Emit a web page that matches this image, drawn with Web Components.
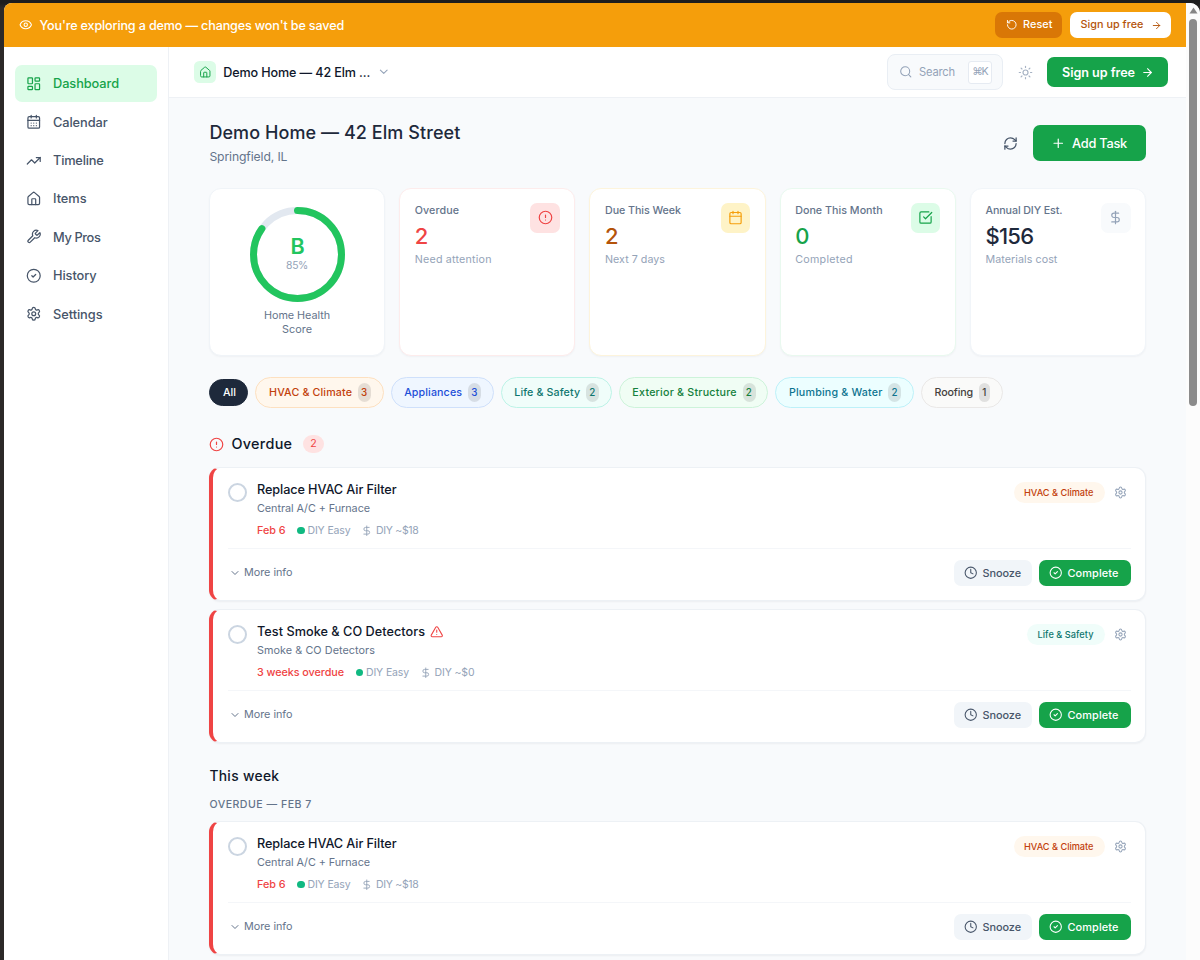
<!DOCTYPE html>
<html lang="en">
<head>
<meta charset="utf-8">
<title>Demo Home — Dashboard</title>
<style>
html,body{margin:0;height:960px;overflow:hidden}
body{font-family:Inter,"Open Sans",sans-serif;background:#2c2928;color:#0f172a}
</style>
</head>
<body>
<app-window></app-window>
<script>
const ICONS={
eye:'<path d="M2.06 12.35a1 1 0 0 1 0-.7 10.75 10.75 0 0 1 19.88 0 1 1 0 0 1 0 .7 10.75 10.75 0 0 1-19.88 0"/><circle cx="12" cy="12" r="3"/>',
reset:'<path d="M3 12a9 9 0 1 0 9-9 9.75 9.75 0 0 0-6.74 2.74L3 8"/><path d="M3 3v5h5"/>',
arrow:'<path d="M5 12h14"/><path d="m12 5 7 7-7 7"/>',
dash:'<rect x="3" y="3" width="7" height="9" rx="1"/><rect x="14" y="3" width="7" height="5" rx="1"/><rect x="14" y="12" width="7" height="9" rx="1"/><rect x="3" y="16" width="7" height="5" rx="1"/>',
caldays:'<path d="M8 2v4M16 2v4"/><rect x="3" y="4" width="18" height="18" rx="2"/><path d="M3 10h18M8 14h.01M12 14h.01M16 14h.01M8 18h.01M12 18h.01M16 18h.01"/>',
cal:'<path d="M8 2v4M16 2v4"/><rect x="3" y="4" width="18" height="18" rx="2"/><path d="M3 10h18"/>',
trend:'<path d="m22 7-8.5 8.5-5-5L2 17"/><path d="M16 7h6v6"/>',
home:'<path d="M15 21v-8a1 1 0 0 0-1-1h-4a1 1 0 0 0-1 1v8"/><path d="M3 10a2 2 0 0 1 .709-1.528l7-6a2 2 0 0 1 2.582 0l7 6A2 2 0 0 1 21 10v9a2 2 0 0 1-2 2H5a2 2 0 0 1-2-2z"/>',
wrench:'<path d="M14.7 6.3a1 1 0 0 0 0 1.4l1.6 1.6a1 1 0 0 0 1.4 0l3.77-3.77a6 6 0 0 1-7.94 7.94l-6.91 6.91a2.12 2.12 0 0 1-3-3l6.91-6.91a6 6 0 0 1 7.94-7.94l-3.76 3.76z"/>',
check:'<circle cx="12" cy="12" r="10"/><path d="m9 12 2 2 4-4"/>',
gear:'<path d="M9.671 4.136a2.34 2.34 0 0 1 4.659 0 2.34 2.34 0 0 0 3.319 1.915 2.34 2.34 0 0 1 2.33 4.033 2.34 2.34 0 0 0 0 3.831 2.34 2.34 0 0 1-2.33 4.033 2.34 2.34 0 0 0-3.319 1.915 2.34 2.34 0 0 1-4.659 0 2.34 2.34 0 0 0-3.32-1.915 2.34 2.34 0 0 1-2.33-4.033 2.34 2.34 0 0 0 0-3.831A2.34 2.34 0 0 1 6.35 6.051a2.34 2.34 0 0 0 3.319-1.915"/><circle cx="12" cy="12" r="3"/>',
down:'<path d="m6 9 6 6 6-6"/>',
search:'<circle cx="11" cy="11" r="8"/><path d="m21 21-4.3-4.3"/>',
sun:'<circle cx="12" cy="12" r="4"/><path d="M12 2v2M12 20v2M4.93 4.93l1.41 1.41M17.66 17.66l1.41 1.41M2 12h2M20 12h2M6.34 17.66l-1.41 1.41M19.07 4.93l-1.41 1.41"/>',
refresh:'<path d="M3 12a9 9 0 0 1 9-9 9.75 9.75 0 0 1 6.74 2.74L21 8"/><path d="M21 3v5h-5"/><path d="M21 12a9 9 0 0 1-9 9 9.75 9.75 0 0 1-6.74-2.74L3 16"/><path d="M8 16H3v5"/>',
plus:'<path d="M5 12h14M12 5v14"/>',
alert:'<circle cx="12" cy="12" r="10"/><path d="M12 8v4M12 16h.01"/>',
square:'<path d="M21 10.656V19a2 2 0 0 1-2 2H5a2 2 0 0 1-2-2V5a2 2 0 0 1 2-2h12.344"/><path d="m9 11 3 3L22 4"/>',
dollar:'<path d="M12 2v20"/><path d="M17 5H9.500a3.500 3.500 0 0 0 0 7h5a3.500 3.500 0 0 1 0 7H6"/>',
warn:'<path d="m21.73 18-8-14a2 2 0 0 0-3.480 0l-8 14A2 2 0 0 0 4 21h16a2 2 0 0 0 1.730-3"/><path d="M12 9v4M12 17h.01"/>',
clock:'<circle cx="12" cy="12" r="10"/><path d="M12 6v6l4 2"/>'
};
const define=(name,render)=>customElements.define(name,class extends HTMLElement{
  connectedCallback(){
    if(this.shadowRoot)return;
    this.attachShadow({mode:'open'}).innerHTML=render(k=>this.getAttribute(k)||'',this);
  }
});
const base='*{box-sizing:border-box}';

define('ui-icon',a=>`<style>:host{display:block;flex:none;width:${a('size')}px;height:${a('size')}px}svg{display:block;width:100%;height:100%}</style>
<svg viewBox="0 0 24 24" fill="none" stroke="currentColor" stroke-width="${a('stroke')||1.9}" stroke-linecap="round" stroke-linejoin="round">${ICONS[a('name')]}</svg>`);

define('demo-banner',()=>`<style>${base}
:host{display:flex;align-items:center;height:44px;padding:0 15px 0 15px;background:#f59e0b;color:#fff}
.msg{margin-left:7px;flex:1;padding-top:1px}
.b{display:flex;align-items:center;height:26px;border-radius:7px;padding:0 11px}
.reset{background:#d97706;width:67px;gap:5.500px;margin-right:7.500px}
.sign{background:#fff;color:#b45309;width:101.500px;gap:7px}
</style><ui-icon name="eye" size="13.500"></ui-icon><div class="msg"><fit-text w="304.500" size="12.600" weight="450">You're exploring a demo — changes won't be saved</fit-text></div>
<div class="b reset"><ui-icon name="reset" size="11.500" stroke="2"></ui-icon><fit-text w="29.500" size="10.800" weight="550">Reset</fit-text></div>
<div class="b sign"><fit-text w="63" size="10.800" weight="550">Sign up free</fit-text><ui-icon name="arrow" size="11" stroke="2"></ui-icon></div>`);

define('nav-item',(a,el)=>`<style>${base}
:host{display:flex;align-items:center;height:36.400px;padding:0 0 0 11px;gap:11.500px;border-radius:7px;color:#475569}
:host([active]){background:#dcfce7;color:#16a34a}
fit-text{padding-top:1.500px}
</style><ui-icon name="${a('icon')}" size="15.500"></ui-icon><fit-text w="${a('w')}" size="12.800" weight="450">${a('label')}</fit-text>`);

define('side-nav',()=>`<style>${base}
:host{display:flex;flex-direction:column;gap:2px;width:165px;flex:none;background:#fff;border-right:1px solid #eef1f5;padding:18.300px 11px 0 11px}
</style><nav-item active icon="dash" label="Dashboard" w="66"></nav-item>
<nav-item icon="caldays" label="Calendar" w="54.500"></nav-item>
<nav-item icon="trend" label="Timeline" w="50.500"></nav-item>
<nav-item icon="home" label="Items" w="33.500"></nav-item>
<nav-item icon="wrench" label="My Pros" w="47.500"></nav-item>
<nav-item icon="check" label="History" w="43.500"></nav-item>
<nav-item icon="gear" label="Settings" w="49.500"></nav-item>`);

define('top-bar',()=>`<style>${base}
:host{display:flex;align-items:center;height:51px;padding:0 18px 0 25.200px;background:#fff;border-bottom:1px solid #eef1f5}
.tile{width:22px;height:22px;border-radius:5.500px;background:#dcfce7;color:#16a34a;display:grid;place-items:center;margin-right:7px}
.name{padding-top:1px}
.down{color:#94a3b8;margin-left:6.500px}
.search{margin-left:auto;width:116px;height:36px;border:1px solid #e9eef4;border-radius:8px;background:#f8fafc;display:flex;align-items:center;padding:0 10px 0 10.500px;color:#94a3b8}
.q{margin-left:7px;flex:1;padding-top:.5px}
kbd{width:24.500px;height:23px;border:1px solid #e6ebf2;border-radius:3px;background:#fff;display:grid;place-items:center;font-family:inherit}
.sun{color:#a7b3c4;margin:0 14.500px 0 14.500px}
.cta{width:121px;height:29.500px;border-radius:7px;background:#16a34a;color:#fff;display:flex;align-items:center;padding-left:15px;gap:5.500px}
.cta fit-text{padding-top:1px}
</style><div class="tile"><ui-icon name="home" size="12.500"></ui-icon></div>
<fit-text class="name" w="147" size="12.600" weight="550">Demo Home — 42 Elm ...</fit-text><ui-icon class="down" name="down" size="13.500"></ui-icon>
<div class="search"><ui-icon name="search" size="13.500"></ui-icon><div class="q"><fit-text w="36" size="11.200">Search</fit-text></div><kbd><fit-text w="15" size="10.600">⌘K</fit-text></kbd></div>
<ui-icon class="sun" name="sun" size="15"></ui-icon>
<div class="cta"><fit-text w="73" size="12.600" weight="620">Sign up free</fit-text><ui-icon name="arrow" size="13" stroke="2"></ui-icon></div>`);

define('page-head',()=>`<style>${base}
:host{display:flex;align-items:center;height:37px;color:#1e293b}
.t{flex:1;display:flex;flex-direction:column;gap:1px;margin-top:2px}.s{color:#64748b}
.r{color:#475569;margin-right:15px}
.add{width:113.500px;height:36.500px;border-radius:7px;background:#16a34a;color:#fff;display:flex;align-items:center;padding-left:18.500px;gap:6.500px}
.add fit-text{padding-top:1px}
</style><div class="t"><fit-text w="251" size="18" weight="550" lh="24">Demo Home — 42 Elm Street</fit-text><fit-text class="s" w="78" size="12.200" lh="22">Springfield, IL</fit-text></div>
<ui-icon class="r" name="refresh" size="15" stroke="2"></ui-icon>
<div class="add"><ui-icon name="plus" size="14.500" stroke="2"></ui-icon><fit-text w="55" size="12.800" weight="550">Add Task</fit-text></div>`);

const card='background:#fff;border-radius:12px;box-shadow:0 1px 2px rgba(15,23,42,.04);';
define('health-card',()=>`<style>${base}
:host{display:flex;flex-direction:column;align-items:center;${card}border:1px solid #f0f4f8;padding-top:17px}
.ring{display:grid;place-items:center;width:97px;height:97px}.ring>*{grid-area:1/1}
svg{width:97px;height:97px}
.c{display:flex;flex-direction:column;align-items:center;padding-top:1px}.b{color:#22c55e}.p{color:#94a3b8}
.l{margin-top:6px;display:flex;flex-direction:column;align-items:center;color:#64748b}
</style><div class="ring"><svg viewBox="0 0 97 97"><circle cx="48.500" cy="48.500" r="44" fill="none" stroke="#e2e8f0" stroke-width="7"/><circle cx="48.500" cy="48.500" r="44" fill="none" stroke="#22c55e" stroke-width="7" stroke-linecap="round" pathLength="100" stroke-dasharray="85 100" transform="rotate(-90 48.500 48.500)"/></svg>
<div class="c"><fit-text class="b" w="13" size="21.500" weight="560" lh="22">B</fit-text><fit-text class="p" w="22" size="10.400" lh="18">85%</fit-text></div></div>
<div class="l"><fit-text w="66" size="10.800" lh="14">Home Health</fit-text><fit-text w="30" size="10.800" lh="14">Score</fit-text></div>`);

define('stat-card',a=>`<style>${base}
:host{display:flex;justify-content:space-between;align-items:flex-start;${card}border:1px solid ${a('line')};padding:14px 14.500px 0 14.500px}
.t{display:flex;flex-direction:column}.l{color:#64748b}.n{color:${a('num')}}.s{color:#94a3b8}
.i{width:29.500px;height:29.500px;border-radius:7px;background:${a('tile')};color:${a('ic')};display:grid;place-items:center}
</style><div class="t"><fit-text class="l" w="${a('w1')}" size="10.700" weight="450" lh="15">${a('label')}</fit-text><fit-text class="n" w="${a('w2')}" size="22" weight="540" lh="36">${a('value')}</fit-text><fit-text class="s" w="${a('w3')}" size="10.700" lh="11">${a('sub')}</fit-text></div>
<div class="i"><ui-icon name="${a('icon')}" size="15"></ui-icon></div>`);

define('filter-chip',a=>`<style>${base}
:host{display:flex;align-items:center;height:${a('n')?31:27}px;border-radius:16px;background:${a('bg')};color:${a('fg')};border:1px solid ${a('line')};padding:0 11.500px 0 12.600px;gap:6px;flex:none}
span{height:19px;min-width:11px;padding:0 3px;border-radius:7px;background:rgba(0,0,0,.1);display:grid;place-items:center}
</style><fit-text w="${a('w')}" size="10.700" weight="450">${a('label')}</fit-text>${a('n')?`<span><fit-text w="${a('n')=='1'?4.5:7}" size="9.800" weight="550">${a('n')}</fit-text></span>`:''}`);

define('task-card',a=>`<style>${base}
:host{display:flex;flex-direction:column;height:134px;flex:none;background:#fff;border:1px solid #edf1f5;border-left:4px solid #ef4444;border-radius:11px;box-shadow:0 1px 2px rgba(15,23,42,.05);padding:0 14.500px}
.top{display:flex;height:81px;flex:none;border-bottom:1px solid #f4f6f9}
.o{width:19px;height:19px;border:2px solid #cbd5e1;border-radius:50%;margin:15px 10.500px 0 0}
.t{flex:1;display:flex;flex-direction:column;padding-top:12px}
.h{display:flex;align-items:center;gap:5px;height:20px;color:#0f172a}.h ui-icon{color:#ef4444}
.s{color:#64748b;height:17px}
.m{display:flex;align-items:center;height:16px;margin-top:5.500px;color:#94a3b8}
.d{color:#ef4444;margin-right:11.500px}.dot{width:7.500px;height:7.500px;border-radius:50%;background:#10b981;margin-right:3px}
.m ui-icon{margin:0 3.500px 0 10.500px}
.tag{height:21px;border-radius:11px;padding:0 11px 0 10.500px;margin:14px 9.500px 0 0;display:flex;align-items:center;background:${a('bg')};color:${a('fg')}}
.g{color:#94a3b8;margin:17.500px 3.500px 0 0}
.bot{display:flex;align-items:center;height:48px;color:#64748b}
.chev{margin:0 3.500px 0 1px}.sp{flex:1}
.b{height:26px;border-radius:7px;display:flex;align-items:center;gap:5px}
.sn{background:#f1f5f9;color:#475569;width:78px;padding-left:10.500px;margin-right:7px}
.co{background:#16a34a;color:#fff;width:92px;padding-left:10.500px}
</style><div class="top"><div class="o"></div><div class="t">
<div class="h"><fit-text w="${a('w1')}" size="12.700" weight="450">${a('label')}</fit-text>${a('warn')?'<ui-icon name="warn" size="13.500"></ui-icon>':''}</div>
<fit-text class="s" w="${a('w2')}" size="10.800" lh="17">${a('sub')}</fit-text>
<div class="m"><fit-text class="d" w="${a('w3')}" size="10.800" weight="450">${a('due')}</fit-text><i class="dot"></i><fit-text w="43" size="10.500">DIY Easy</fit-text><ui-icon name="dollar" size="11.500"></ui-icon><fit-text w="${a('w4')}" size="10.500">${a('cost')}</fit-text></div>
</div><div class="tag"><fit-text w="${a('w5')}" size="9.200" weight="450">${a('cat')}</fit-text></div><ui-icon class="g" name="gear" size="13"></ui-icon></div>
<div class="bot"><ui-icon class="chev" name="down" size="12" stroke="2"></ui-icon><fit-text w="48.500" size="10.800">More info</fit-text><div class="sp"></div>
<div class="b sn"><ui-icon name="clock" size="13.500"></ui-icon><fit-text w="38.500" size="10.900" weight="450">Snooze</fit-text></div>
<div class="b co"><ui-icon name="check" size="13.500"></ui-icon><fit-text w="51" size="10.900" weight="550">Complete</fit-text></div></div>`);

define('section-head',a=>`<style>${base}
:host{display:flex;align-items:center;height:19px;color:#0f172a}
ui-icon{color:#ef4444;margin-right:7px}
.n{margin-left:11px;height:18.500px;width:20.500px;border-radius:10px;background:#fee2e2;color:#ef4444;display:grid;place-items:center}
</style><ui-icon name="alert" size="15"></ui-icon><fit-text w="61" size="14.400" weight="550">Overdue</fit-text><div class="n"><fit-text w="7" size="10.600">2</fit-text></div>`);

define('scroll-bar',()=>`<style>${base}
:host{display:flex;flex-direction:column;align-items:center;width:14px;flex:none;background:#fcfcfc;padding-top:4px}
svg{width:9px;height:7px;flex:none}i{width:8.500px;height:387px;margin-top:5px;border-radius:5px;background:#8b8b8b}
</style><svg viewBox="0 0 9 7"><path d="M4.500 .5 8.500 6.500H.5z" fill="#858585"/></svg><i></i>`);

const hvac='label="Replace HVAC Air Filter" w1="139.500" sub="Central A/C + Furnace" w2="113" due="Feb 6" w3="28.500" cost="DIY ~$18" w4="42.500" cat="HVAC &amp; Climate" w5="69.500" bg="#fff7ed" fg="#c2410c"';
define('app-window',()=>`<style>${base}
:host{display:flex;height:960px;padding:3px 0 0 4px;background:linear-gradient(#1d1d1e 3px,#2c2928 8px)}
.win{display:flex;width:1196px;height:957px;border-radius:8px 10px 0 0;overflow:hidden;background:#f8fafc}
.page{width:1182px;display:flex;flex-direction:column}
.body{display:flex;flex:1;min-height:0}
.right{flex:1;display:flex;flex-direction:column;min-width:0}
main{padding:26.500px 40px 0 40px;display:flex;flex-direction:column}
page-head,.chips,section-head,.wk,.grp{margin-left:.4px}
.stats{display:grid;grid-template-columns:repeat(5,1fr);gap:14.200px;height:168px;margin-top:26.500px}
.chips{display:flex;align-items:center;gap:7px;height:31px;margin-top:21px}
section-head{margin-top:26.500px;margin-bottom:13.500px}
.wk{margin-top:22px;color:#0f172a}.grp{margin-top:11px;margin-bottom:9px;color:#64748b}
task-card + task-card{margin-top:8px}
</style><div class="win"><div class="page"><demo-banner></demo-banner><div class="body"><side-nav></side-nav><div class="right"><top-bar></top-bar>
<main><page-head></page-head>
<div class="stats"><health-card></health-card>
<stat-card label="Overdue" w1="44.500" value="2" w2="12" sub="Need attention" w3="77" num="#ef4444" line="#fdecec" tile="#fee2e2" ic="#ef4444" icon="alert"></stat-card>
<stat-card label="Due This Week" w1="76" value="2" w2="12" sub="Next 7 days" w3="60" num="#b45309" line="#fdf4dc" tile="#fef3c7" ic="#f59e0b" icon="cal"></stat-card>
<stat-card label="Done This Month" w1="87.500" value="0" w2="15" sub="Completed" w3="57.500" num="#16a34a" line="#e9f9ef" tile="#dcfce7" ic="#16a34a" icon="square"></stat-card>
<stat-card label="Annual DIY Est." w1="77" value="$156" w2="48" sub="Materials cost" w3="72" num="#1e293b" line="#f1f5f9" tile="#f8fafc" ic="#94a3b8" icon="dollar"></stat-card></div>
<div class="chips"><filter-chip label="All" w="13" bg="#1e293b" fg="#fff" line="#1e293b"></filter-chip>
<filter-chip label="HVAC &amp; Climate" w="83" n="3" bg="#fff7ed" fg="#c2410c" line="#fde0c0"></filter-chip>
<filter-chip label="Appliances" w="58" n="3" bg="#eff6ff" fg="#1d4ed8" line="#cfe0fb"></filter-chip>
<filter-chip label="Life &amp; Safety" w="66" n="2" bg="#f0fdfa" fg="#0f766e" line="#bdf3e7"></filter-chip>
<filter-chip label="Exterior &amp; Structure" w="104.500" n="2" bg="#f0fdf4" fg="#15803d" line="#cdf3da"></filter-chip>
<filter-chip label="Plumbing &amp; Water" w="93.500" n="2" bg="#ecfeff" fg="#0e7490" line="#bdf1f9"></filter-chip>
<filter-chip label="Roofing" w="38.500" n="1" bg="#fafaf9" fg="#44403c" line="#eae8e7"></filter-chip></div>
<section-head></section-head>
<task-card ${hvac}></task-card>
<task-card warn="1" label="Test Smoke &amp; CO Detectors" w1="168" sub="Smoke &amp; CO Detectors" w2="118" due="3 weeks overdue" w3="87" cost="DIY ~$0" w4="40" cat="Life &amp; Safety" w5="56" bg="#f0fdfa" fg="#0f766e"></task-card>
<fit-text class="wk" w="70" size="13.800" weight="550" lh="22">This week</fit-text>
<fit-text class="grp" w="102.500" size="10.600" weight="450" lh="14">OVERDUE — FEB 7</fit-text>
<task-card ${hvac}></task-card>
</main></div></div></div><scroll-bar></scroll-bar></div>`);

/* A single line of label text whose tracking is tuned to a set advance width. */
customElements.define('fit-text',class extends HTMLElement{
  connectedCallback(){
    if(this.shadowRoot)return;
    const g=k=>this.getAttribute(k);
    const w=+g('w');
    this.attachShadow({mode:'open'}).innerHTML=`<style>:host{display:block;flex:none;width:${w}px;white-space:nowrap;font-size:${g('size')}px;font-weight:${g('weight')||400};line-height:${g('lh')||16}px}span{display:inline-block}</style><span><slot></slot></span>`;
    const s=this.shadowRoot.querySelector('span');
    const n=this.textContent.length;
    if(n>1)s.style.letterSpacing=((w-s.getBoundingClientRect().width)/n).toFixed(3)+'px';
  }
});
</script>
</body>
</html>
